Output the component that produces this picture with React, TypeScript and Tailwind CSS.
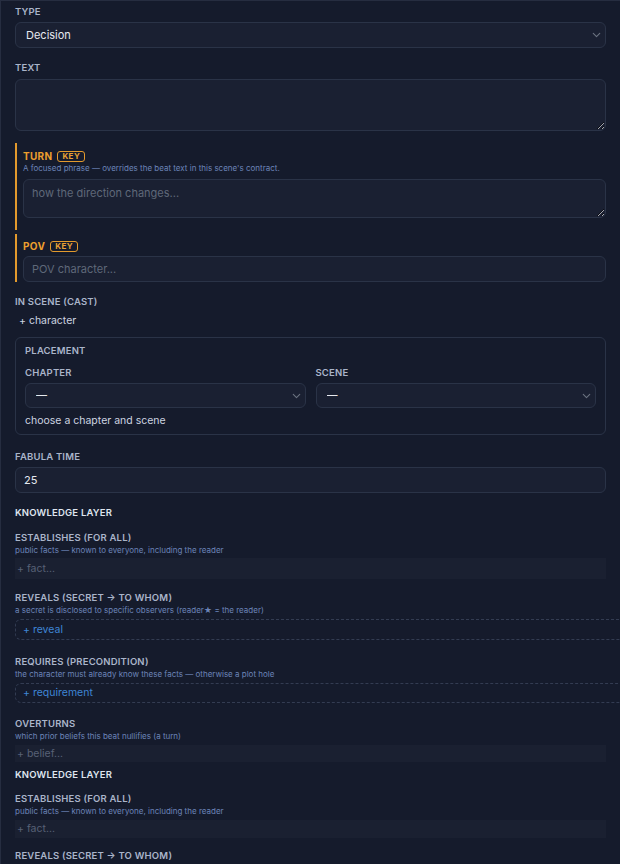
import { ChevronDown } from 'lucide-react';

const label = 'block h-[12px] text-[9.5px] leading-[12px] font-semibold tracking-[0.02em] uppercase text-[#aab5ca]';
const hint = 'h-[12px] text-[8px] leading-[12px] text-[#6c84b8]';
const field = 'w-full rounded-md border border-[#2a3347] bg-[#1a2032] text-[11px] text-[#e6e9f0] placeholder:text-[#5f6879] focus:outline-none';

function Select({ value, className }: { value: string; className?: string }) {
    return (
        <div className={`relative ${className ?? ''}`}>
            <select
                defaultValue={value}
                className={`${field} block h-full appearance-none pl-[10px] pr-6`}
            >
                <option>{value}</option>
            </select>
            <ChevronDown
                size={13}
                strokeWidth={2}
                className="pointer-events-none absolute top-1/2 right-[3px] -translate-y-1/2 text-[#6b7280]"
            />
        </div>
    );
}

function KeyBadge() {
    return (
        <span className="ml-[5px] inline-flex h-[11px] items-center rounded-[3px] border border-[#e39a2d] px-[4px] text-[8px] leading-none font-bold tracking-[0.06em] text-[#e9a235]">
            KEY
        </span>
    );
}

function FactRow({ text, h, mt }: { text: string; h: string; mt: string }) {
    return (
        <div className={`${mt} ${h} flex items-center bg-[#1a2031] pl-[2px] text-[10.5px] text-[#586176]`}>
            {text}
        </div>
    );
}

function DashedRow({ text, h, mt }: { text: string; h: string; mt: string }) {
    return (
        <div className={`${mt} ${h} -mr-[24px] flex items-center rounded-md border border-dashed border-[#333c52] pl-[7px] text-[10.5px] text-[#3f86d6]`}>
            {text}
        </div>
    );
}

function KnowledgeLayer({ first }: { first: boolean }) {
    return (
        <>
            <div className={`${first ? 'mt-[14px]' : 'mt-[7px]'} h-[12px] text-[9.5px] leading-[12px] font-semibold tracking-[0.02em] text-[#dfe5ef]`}>
                KNOWLEDGE LAYER
            </div>
            <div className={first ? 'mt-[13px]' : 'mt-[12px]'}>
                <span className={label}>Establishes (for all)</span>
                <p className={hint}>public facts — known to everyone, including the reader</p>
                <FactRow text="+ fact..." h={first ? 'h-[21px]' : 'h-[18px]'} mt={first ? 'mt-[2px]' : 'mt-[3px]'} />
            </div>
            {first ? (
                <>
                    <div className="mt-[13px]">
                        <span className={label}>Reveals (secret → to whom)</span>
                        <p className={hint}>a secret is disclosed to specific observers (reader★ = the reader)</p>
                        <DashedRow text="+ reveal" h="h-[21px]" mt="mt-[3px]" />
                    </div>
                    <div className="mt-[16px]">
                        <span className={label}>Requires (precondition)</span>
                        <p className={hint}>the character must already know these facts — otherwise a plot hole</p>
                        <DashedRow text="+ requirement" h="h-[20px]" mt="mt-[3px]" />
                    </div>
                    <div className="mt-[15px]">
                        <span className={label}>Overturns</span>
                        <p className={hint}>which prior beliefs this beat nullifies (a turn)</p>
                        <FactRow text="+ belief..." h="h-[17px]" mt="mt-[3px]" />
                    </div>
                </>
            ) : (
                <div className="mt-[12px]">
                    <span className={label}>Reveals (secret → to whom)</span>
                    <p className={hint}>a secret is disclosed to specific observers (reader★ = the reader)</p>
                    <DashedRow text="+ reveal" h="h-[21px]" mt="mt-[3px]" />
                </div>
            )}
        </>
    );
}

export default function App() {
    return (
        <div className="h-[864px] overflow-hidden border-t border-l border-[#262d40] bg-[#151b2c] pt-[5px] pr-[14px] pl-[14px] font-['Inter','Liberation_Sans',sans-serif]">
            <div>
                <span className={label}>Type</span>
                <Select value="Decision" className="mt-[4px] h-[26px]" />
            </div>

            <div className="mt-[14px]">
                <span className={label}>Text</span>
                <textarea className={`${field} mt-[5px] block h-[52px] px-[8px] py-[5px]`} />
            </div>

            <div className="mt-[12px] border-l-2 border-[#e39a2d] pt-[7px] pb-[12px] pl-[6px]">
                <div className="flex h-[12px] items-center text-[10px] leading-[12px] font-bold tracking-[0.03em] text-[#ec9f2e]">
                    TURN
                    <KeyBadge />
                </div>
                <p className={hint}>A focused phrase — overrides the beat text in this scene's contract.</p>
                <textarea
                    placeholder="how the direction changes..."
                    className={`${field} mt-[5px] block h-[39px] px-[8px] py-[5px]`}
                />
            </div>

            <div className="mt-[4px] border-l-2 border-[#e39a2d] pt-[6px] pl-[6px]">
                <div className="flex h-[12px] items-center text-[10px] leading-[12px] font-bold tracking-[0.03em] text-[#ec9f2e]">
                    POV
                    <KeyBadge />
                </div>
                <input
                    placeholder="POV character..."
                    className={`${field} mt-[4px] block h-[26px] px-[8px]`}
                />
            </div>

            <div className="mt-[14px]">
                <span className={label}>In scene (cast)</span>
                <div className="mt-[6px] h-[14px] pl-[4px] text-[10.5px] leading-[14px] text-[#cdd4e0]">+ character</div>
            </div>

            <div className="mt-[9px] rounded-md border border-[#2a3347] px-[9px] pt-[7px] pb-[6px]">
                <span className={label}>Placement</span>
                <div className="mt-[10px] grid grid-cols-2 gap-[10px]">
                    <div>
                        <span className={label}>Chapter</span>
                        <Select value="—" className="mt-[4px] h-[25px]" />
                    </div>
                    <div>
                        <span className={label}>Scene</span>
                        <Select value="—" className="mt-[4px] h-[25px]" />
                    </div>
                </div>
                <div className="mt-[6px] h-[14px] text-[10.5px] leading-[14px] text-[#cdd4e0]">choose a chapter and scene</div>
            </div>

            <div className="mt-[16px]">
                <span className={label}>Fabula time</span>
                <input defaultValue="25" className={`${field} mt-[4px] block h-[26px] px-[8px]`} />
            </div>

            <KnowledgeLayer first />
            <KnowledgeLayer first={false} />
        </div>
    );
}
